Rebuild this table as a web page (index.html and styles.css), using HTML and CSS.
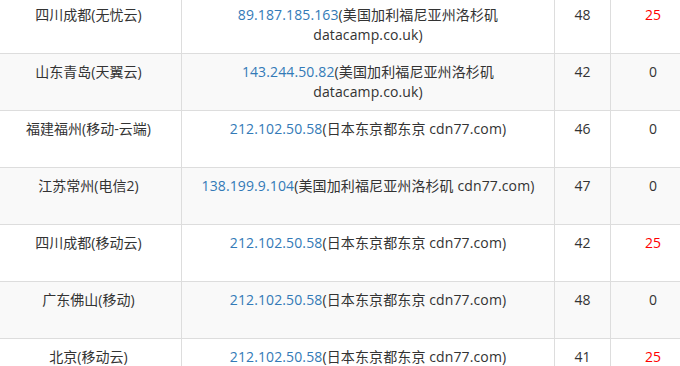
FILE: index.html
```html
<!DOCTYPE html>
<html lang="zh-CN">
<head>
<meta charset="utf-8">
<title>测速结果</title>
<link rel="stylesheet" href="styles.css">
</head>
<body>
<table class="result">
  <colgroup>
    <col class="c-node">
    <col class="c-ip">
    <col class="c-ping">
    <col class="c-loss">
  </colgroup>
  <tbody>
    <tr>
      <td>四川成都(无忧云)</td>
      <td class="addr"><a class="ip" href="#">89.187.185.163</a><span>(美国加利福尼亚州洛杉矶</span><br><span>datacamp.co.uk)</span></td>
      <td>48</td>
      <td class="bad">25</td>
    </tr>
    <tr>
      <td>山东青岛(天翼云)</td>
      <td class="addr"><a class="ip" href="#">143.244.50.82</a><span>(美国加利福尼亚州洛杉矶</span><br><span>datacamp.co.uk)</span></td>
      <td>42</td>
      <td>0</td>
    </tr>
    <tr>
      <td>福建福州(移动-云端)</td>
      <td class="addr"><a class="ip" href="#">212.102.50.58</a><span>(日本东京都东京 cdn77.com)</span></td>
      <td>46</td>
      <td>0</td>
    </tr>
    <tr>
      <td>江苏常州(电信2)</td>
      <td class="addr"><a class="ip" href="#">138.199.9.104</a><span>(美国加利福尼亚州洛杉矶 cdn77.com)</span></td>
      <td>47</td>
      <td>0</td>
    </tr>
    <tr>
      <td>四川成都(移动云)</td>
      <td class="addr"><a class="ip" href="#">212.102.50.58</a><span>(日本东京都东京 cdn77.com)</span></td>
      <td>42</td>
      <td class="bad">25</td>
    </tr>
    <tr>
      <td>广东佛山(移动)</td>
      <td class="addr"><a class="ip" href="#">212.102.50.58</a><span>(日本东京都东京 cdn77.com)</span></td>
      <td>48</td>
      <td>0</td>
    </tr>
    <tr>
      <td>北京(移动云)</td>
      <td class="addr"><a class="ip" href="#">212.102.50.58</a><span>(日本东京都东京 cdn77.com)</span></td>
      <td>41</td>
      <td class="bad">25</td>
    </tr>
  </tbody>
</table>
</body>
</html>
```

FILE: styles.css
```css
html, body {
  margin: 0;
  padding: 0;
  background: #ffffff;
  overflow: hidden;
}

.result {
  margin: -4px 0 0 -5px;
  border-collapse: collapse;
  table-layout: fixed;
  width: 700px;
  font-family: "Open Sans", "Noto Sans CJK SC", sans-serif;
  font-size: 14px;
  line-height: 20px;
  color: #333333;
}

.c-node { width: 186px; }
.c-ip { width: 373px; }
.c-ping { width: 56px; }
.c-loss { width: 85px; }

.result td {
  border: 1px solid #dddddd;
  padding: 8px 8px;
  height: 40px;
  vertical-align: top;
  text-align: center;
}

.result td.addr {
  letter-spacing: 0.12px;
}

.result tr:nth-child(even) td {
  background: #f9f9f9;
}

.ip {
  color: #337ab7;
  text-decoration: none;
}

.bad {
  color: #ff0000;
}
```
